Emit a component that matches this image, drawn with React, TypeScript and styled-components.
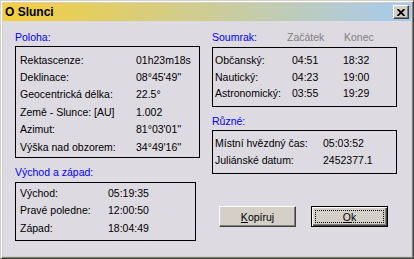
import React from 'react';
import styled, { createGlobalStyle } from 'styled-components';

const GlobalStyle = createGlobalStyle`
  html, body {
    margin: 0;
    padding: 0;
    background: #dedae2;
  }
  body {
    font-family: "Liberation Sans", Arial, sans-serif;
    font-size: 10.5px;
    color: #000;
  }
`;

const Window = styled.div`
  width: 414px;
  height: 259px;
  box-sizing: border-box;
  display: flex;
  flex-direction: column;
  background: #d4d0c8;
  border: 1px solid;
  border-color: #d4d0c8 #404040 #404040 #d4d0c8;
  box-shadow: inset 1px 1px #ffffff, inset -1px -1px #808080;
  padding: 2px;
`;

const TitleBar = styled.div`
  height: 18px;
  flex-shrink: 0;
  display: flex;
  align-items: center;
  justify-content: space-between;
  padding: 0 2px;
  background: linear-gradient(to right, #f5cf3a, #a6caf0);
`;

const Title = styled.span`
  font-size: 12px;
  font-weight: bold;
  color: #000;
`;

const CloseButton = styled.button`
  width: 16px;
  height: 14px;
  padding: 0;
  display: flex;
  align-items: center;
  justify-content: center;
  background: #d4d0c8;
  border: 1px solid;
  border-color: #ffffff #404040 #404040 #ffffff;
  box-shadow: inset -1px -1px #808080;
`;

const Body = styled.div`
  flex: 1;
  display: flex;
  gap: 12px;
  padding: 10px 0 0 12px;
  background: #dedae2;
`;

const Column = styled.div`
  width: 185px;
  display: flex;
  flex-direction: column;
`;

const Heading = styled.div<{ $top?: number; $bottom: number; $cols?: string }>`
  height: 13px;
  line-height: 13px;
  margin-top: ${p => p.$top ?? 0}px;
  margin-bottom: ${p => p.$bottom}px;
  display: grid;
  grid-template-columns: ${p => p.$cols ?? 'auto'};
  color: #0000ff;
  white-space: nowrap;
`;

const SubHeading = styled.span`
  color: #808080;
`;

const Frame = styled.div<{ $cols: string; $row: number; $pad: string; $width?: number }>`
  width: ${p => (p.$width ? `${p.$width}px` : 'auto')};
  box-sizing: border-box;
  border: 1px solid #000;
  padding: ${p => p.$pad};
  display: grid;
  grid-template-columns: ${p => p.$cols};
  grid-auto-rows: ${p => p.$row}px;
  align-items: center;
  white-space: nowrap;
`;

const ButtonRow = styled.div`
  display: flex;
  gap: 15px;
  padding-left: 7px;
  margin-top: 32px;
`;

const Button = styled.button<{ $default?: boolean }>`
  position: relative;
  width: 77px;
  height: 21px;
  padding: 0;
  font-family: "Liberation Sans", Arial, sans-serif;
  font-size: 10.5px;
  color: #000;
  background: #d4d0c8;
  border: 1px solid;
  border-color: ${p => (p.$default ? '#000' : '#ffffff #404040 #404040 #ffffff')};
  box-shadow: ${p =>
    p.$default
      ? 'inset 1px 1px #ffffff, inset -1px -1px #404040, inset -2px -2px #808080'
      : 'inset -1px -1px #808080'};

  u {
    text-decoration: underline;
  }
`;

const FocusRing = styled.span`
  position: absolute;
  inset: 3px;
  border: 1px dotted #000;
  pointer-events: none;
`;

const poloha = [
  ['Rektascenze:', '01h23m18s'],
  ['Deklinace:', '08°45\'49\'\''],
  ['Geocentrická délka:', '22.5°'],
  ['Země - Slunce: [AU]', '1.002'],
  ['Azimut:', '81°03\'01\'\''],
  ['Výška nad obzorem:', '34°49\'16\'\''],
];

const vychod = [
  ['Východ:', '05:19:35'],
  ['Pravé poledne:', '12:00:50'],
  ['Západ:', '18:04:49'],
];

const soumrak = [
  ['Občanský:', '04:51', '18:32'],
  ['Nautický:', '04:23', '19:00'],
  ['Astronomický:', '03:55', '19:29'],
];

const ruzne = [
  ['Místní hvězdný čas:', '05:03:52'],
  ['Juliánské datum:', '2452377.1'],
];

export default function App() {
  return (
    <>
      <GlobalStyle />
      <Window>
        <TitleBar>
          <Title>O Slunci</Title>
          <CloseButton aria-label="Zavřít">
            <svg width="8" height="7" viewBox="0 0 8 7">
              <path d="M0.5 0 L7.5 7 M7.5 0 L0.5 7" stroke="#000" strokeWidth="1.8" />
            </svg>
          </CloseButton>
        </TitleBar>
        <Body>
          <Column>
            <Heading $bottom={2}>Poloha:</Heading>
            <Frame $cols="116px auto" $row={17.4} $pad="4px 0 2px 4px">
              {poloha.map(([l, v]) => (
                <React.Fragment key={l}>
                  <span>{l}</span>
                  <span>{v}</span>
                </React.Fragment>
              ))}
            </Frame>
            <Heading $top={8} $bottom={3}>Východ a západ:</Heading>
            <Frame $cols="88px auto" $row={17.4} $pad="1px 0 3px 4px" $width={181}>
              {vychod.map(([l, v]) => (
                <React.Fragment key={l}>
                  <span>{l}</span>
                  <span>{v}</span>
                </React.Fragment>
              ))}
            </Frame>
          </Column>
          <Column>
            <Heading $bottom={2.5} $cols="75px 57px auto">
              <span>Soumrak:</span>
              <SubHeading>Začátek</SubHeading>
              <SubHeading>Konec</SubHeading>
            </Heading>
            <Frame $cols="77px 51px auto" $row={16.7} $pad="4px 0 4px 2px">
              {soumrak.map(([l, a, b]) => (
                <React.Fragment key={l}>
                  <span>{l}</span>
                  <span>{a}</span>
                  <span>{b}</span>
                </React.Fragment>
              ))}
            </Frame>
            <Heading $top={8.5} $bottom={2}>Různé:</Heading>
            <Frame $cols="108px auto" $row={17.5} $pad="3px 0 4px 2px">
              {ruzne.map(([l, v]) => (
                <React.Fragment key={l}>
                  <span>{l}</span>
                  <span>{v}</span>
                </React.Fragment>
              ))}
            </Frame>
            <ButtonRow>
              <Button>
                <u>K</u>opíruj
              </Button>
              <Button $default>
                <FocusRing />
                <u>O</u>k
              </Button>
            </ButtonRow>
          </Column>
        </Body>
      </Window>
    </>
  );
}
